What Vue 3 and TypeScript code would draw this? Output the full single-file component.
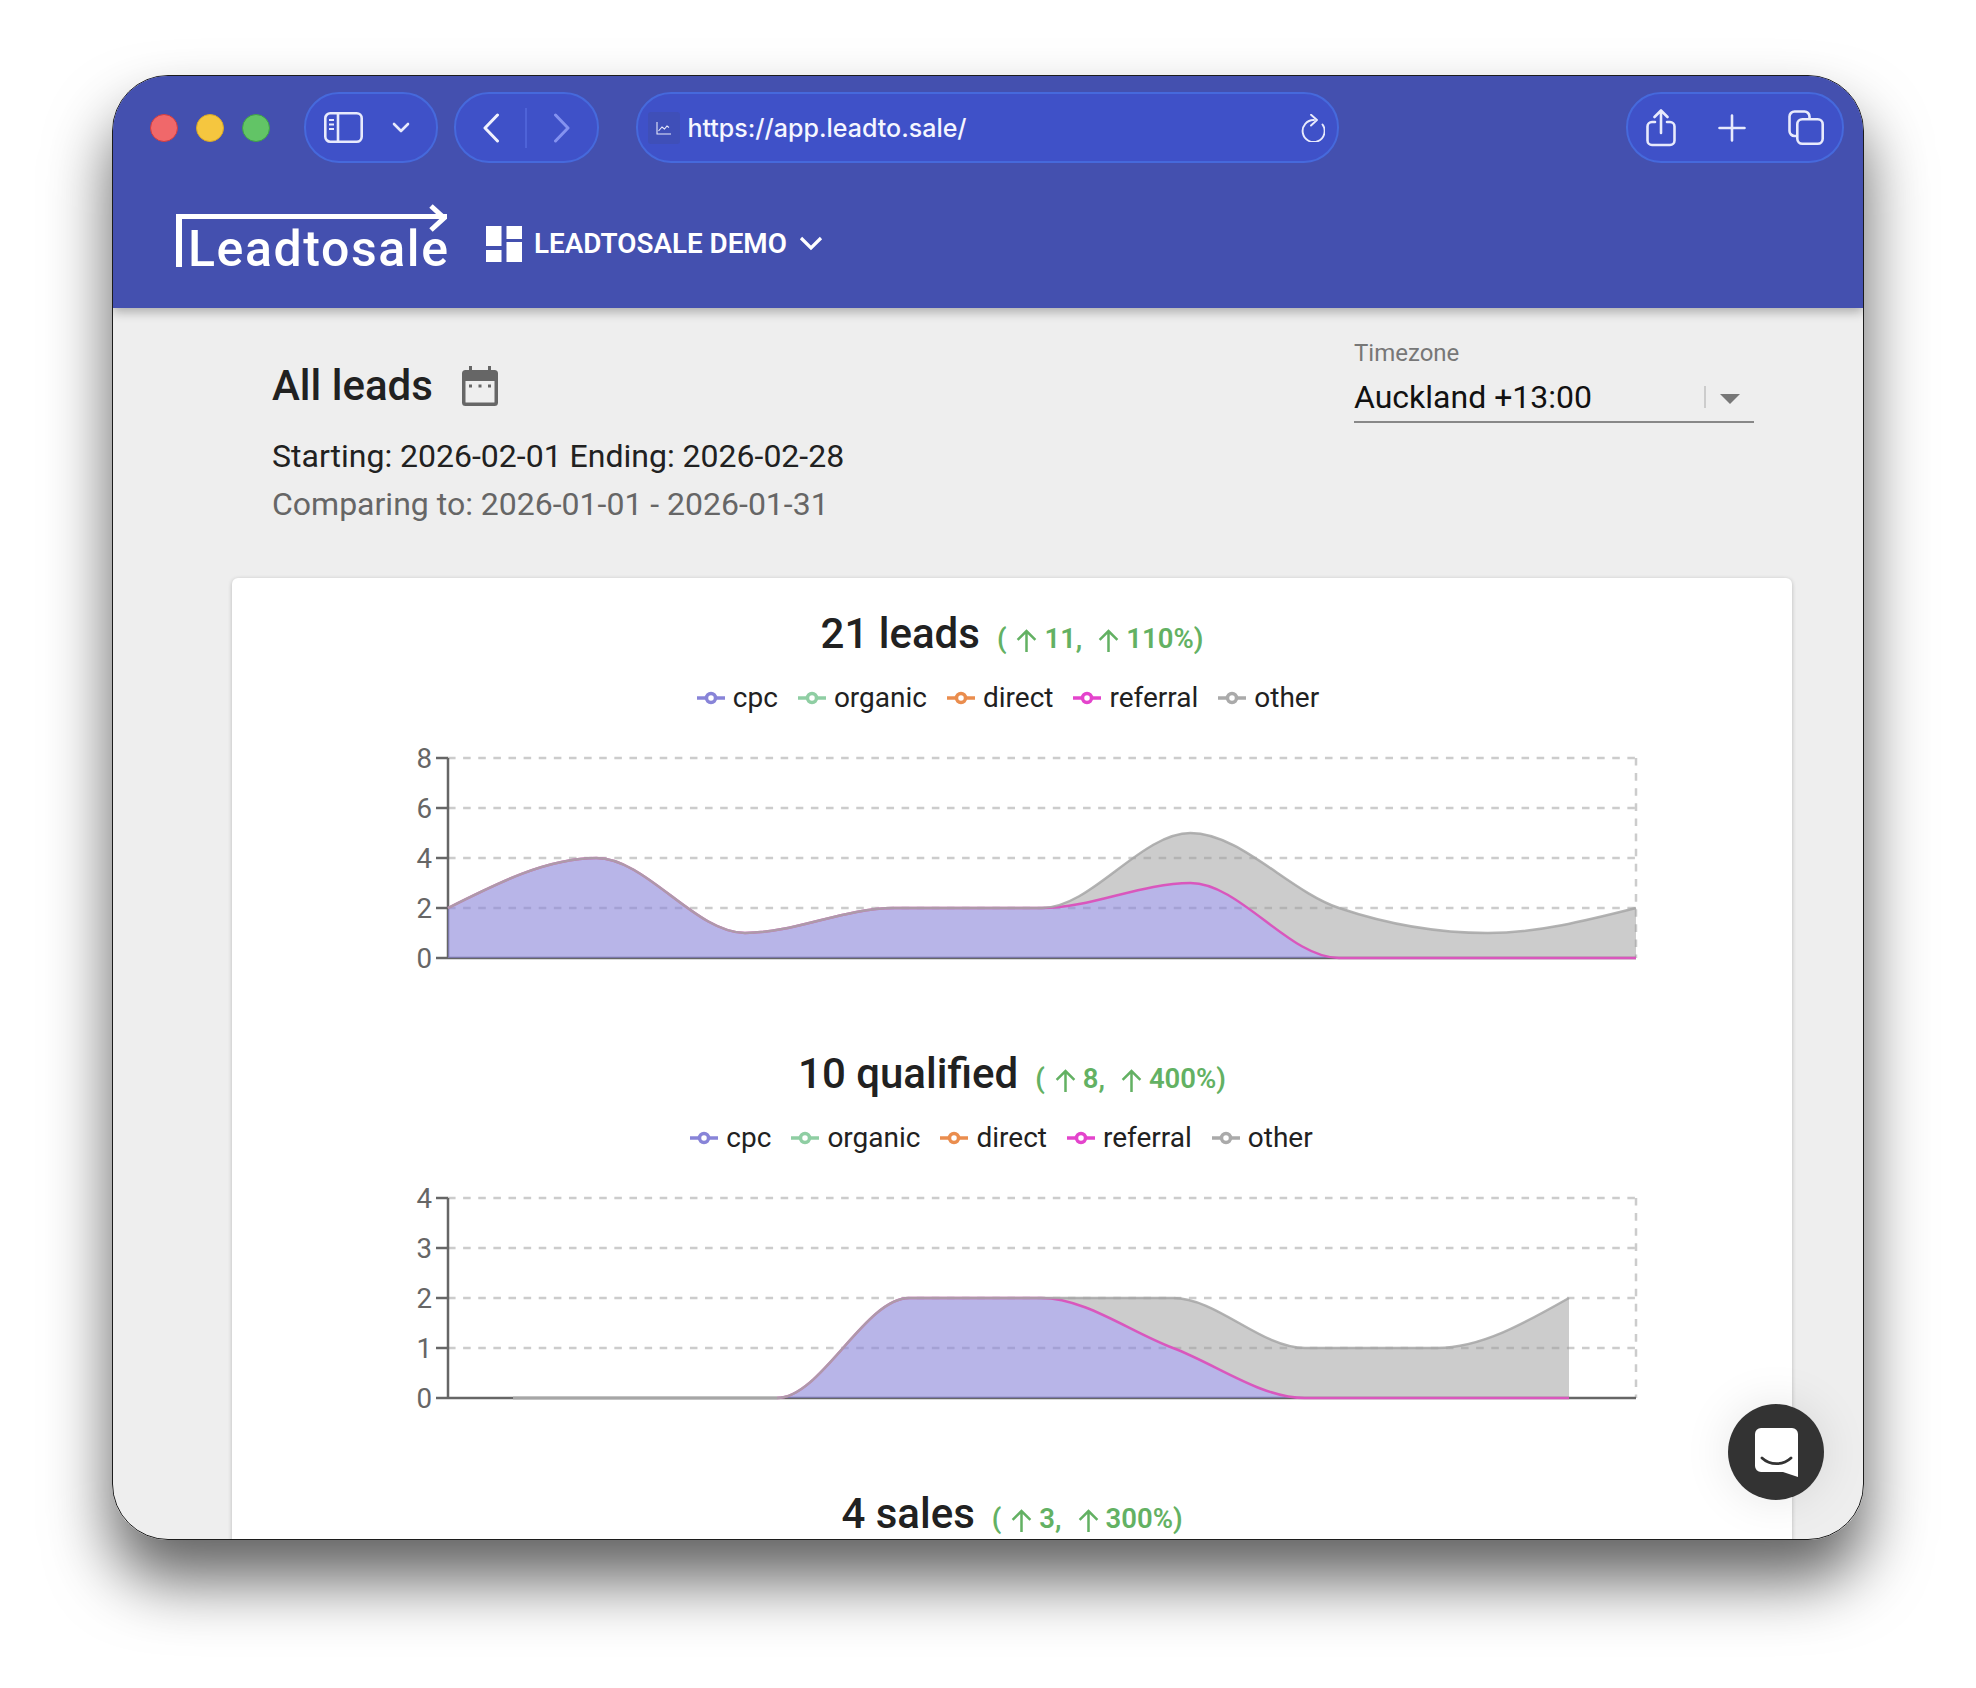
<script setup lang="ts">
interface Series { name: string; color: string }
interface Chart {
  title: string
  deltas: string[]
  legendClass: string
  labels: number[]
  x0: number
  step: number
  cpc: number[]
  total: number[]
  unit: number
}

const series: Series[] = [
  { name: 'cpc', color: '#8884d8' },
  { name: 'organic', color: '#8fcea3' },
  { name: 'direct', color: '#ea8d4e' },
  { name: 'referral', color: '#e444cc' },
  { name: 'other', color: '#aaaaaa' },
]

const charts: Chart[] = [
  {
    title: '21 leads',
    deltas: ['11,', '110%'],
    legendClass: 'legend-a',
    labels: [8, 6, 4, 2, 0],
    x0: 216,
    step: 148.5,
    cpc: [2, 4, 1, 2, 2, 3, 0, 0, 0],
    total: [2, 4, 1, 2, 2, 5, 2, 1, 2],
    unit: 25,
  },
  {
    title: '10 qualified',
    deltas: ['8,', '400%'],
    legendClass: 'legend-b',
    labels: [4, 3, 2, 1, 0],
    x0: 281,
    step: 132,
    cpc: [0, 0, 0, 2, 2, 1, 0, 0, 0],
    total: [0, 0, 0, 2, 2, 2, 1, 1, 2],
    unit: 50,
  },
  {
    title: '4 sales',
    deltas: ['3,', '300%'],
    legendClass: 'legend-a',
    labels: [],
    x0: 0,
    step: 0,
    cpc: [],
    total: [],
    unit: 0,
  },
]

const BASE = 220

function tangents(xs: number[], ys: number[]): number[] {
  const n = xs.length
  const t: number[] = new Array(n).fill(0)
  for (let i = 1; i < n - 1; i++) {
    const h0 = xs[i] - xs[i - 1]
    const h1 = xs[i + 1] - xs[i]
    const s0 = (ys[i] - ys[i - 1]) / h0
    const s1 = (ys[i + 1] - ys[i]) / h1
    const p = (s0 * h1 + s1 * h0) / (h0 + h1)
    t[i] = (Math.sign(s0) + Math.sign(s1)) * Math.min(Math.abs(s0), Math.abs(s1), 0.5 * Math.abs(p)) || 0
  }
  t[0] = (3 * (ys[1] - ys[0]) / (xs[1] - xs[0]) - t[1]) / 2
  t[n - 1] = (3 * (ys[n - 1] - ys[n - 2]) / (xs[n - 1] - xs[n - 2]) - t[n - 2]) / 2
  return t
}

function curve(xs: number[], ys: number[], from = 0): string {
  const t = tangents(xs, ys)
  let d = ''
  for (let i = from; i < xs.length - 1; i++) {
    const dx = (xs[i + 1] - xs[i]) / 3
    d += `C${xs[i] + dx},${ys[i] + dx * t[i]} ${xs[i + 1] - dx},${ys[i + 1] - dx * t[i + 1]} ${xs[i + 1]},${ys[i + 1]}`
  }
  return d
}

function xsOf(c: Chart): number[] {
  return c.total.map((_, i) => c.x0 + i * c.step)
}
function ysOf(c: Chart, v: number[]): number[] {
  return v.map((n) => BASE - n * c.unit)
}
function line(c: Chart, v: number[], from = 0): string {
  const x = xsOf(c)
  const y = ysOf(c, v)
  return `M${x[from]},${y[from]}` + curve(x, y, from)
}
function firstRise(v: number[]): number {
  const i = v.findIndex((n) => n > 0)
  return Math.max(0, i - 1)
}
function flatLead(c: Chart): string {
  const x = xsOf(c)
  return `M${x[0]},${BASE}H${x[firstRise(c.total)]}`
}
function cpcArea(c: Chart): string {
  const x = xsOf(c)
  return `${line(c, c.cpc)}L${x[x.length - 1]},${BASE}L${x[0]},${BASE}Z`
}
function otherArea(c: Chart): string {
  const x = xsOf(c)
  const yb = ysOf(c, c.cpc)
  const rx = [...x].reverse()
  const ry = [...yb].reverse()
  return `${line(c, c.total)}L${rx[0]},${ry[0]}${curve(rx, ry)}Z`
}
function tickY(i: number): number {
  return 20 + i * 50
}
</script>

<template>
  <div class="stage">
    <div class="window">
      <header class="appbar">
        <div class="toolbar">
          <div class="lights">
            <span class="light red"></span>
            <span class="light yellow"></span>
            <span class="light green"></span>
          </div>
          <div class="pill pill-side">
            <svg width="39" height="31" viewBox="0 0 39 31" fill="none" stroke="#e8eafc" stroke-width="2.6">
              <rect x="1.3" y="1.3" width="36.4" height="28.4" rx="5" />
              <path d="M14 1.3v28.4" />
              <path d="M5 8h5M5 12.5h5M5 17h5" stroke-width="1.8" />
            </svg>
            <svg width="18" height="11" viewBox="0 0 18 11" fill="none" stroke="#e8eafc" stroke-width="2.6" stroke-linecap="round" stroke-linejoin="round">
              <path d="M2 2l7 7 7-7" />
            </svg>
          </div>
          <div class="pill pill-nav">
            <svg width="18" height="30" viewBox="0 0 18 30" fill="none" stroke="#f0f1fd" stroke-width="3" stroke-linecap="round" stroke-linejoin="round">
              <path d="M15.5 2L3 15l12.5 13" />
            </svg>
            <span class="nav-divider"></span>
            <svg width="18" height="30" viewBox="0 0 18 30" fill="none" stroke="#8492f0" stroke-width="3" stroke-linecap="round" stroke-linejoin="round">
              <path d="M2.5 2L15 15 2.5 28" />
            </svg>
          </div>
          <div class="pill pill-url">
            <span class="favicon">
              <svg width="16" height="14" viewBox="0 0 16 14" fill="none" stroke="#e8eafc" stroke-width="1.1">
                <path d="M1 1v12h14" />
                <path d="M2.5 10l3.5-4 2.5 2 2.5-3 2 1.5" />
              </svg>
            </span>
            <span class="url">https://app.leadto.sale/</span>
            <svg class="reload" width="24" height="28" viewBox="0 0 24 28" fill="none" stroke="#e8eafc" stroke-width="1.9" stroke-linecap="round" stroke-linejoin="round">
              <path d="M13 6A11 11 0 1 0 21.500 10.500" />
              <path d="M10 0.800L16 6 10 11.500" />
            </svg>
          </div>
          <div class="toolbar-gap"></div>
          <div class="pill pill-actions">
            <svg width="30" height="38" viewBox="0 0 30 38" fill="none" stroke="#e8eafc" stroke-width="2.6" stroke-linecap="round" stroke-linejoin="round">
              <path d="M9 13H6a4.5 4.5 0 0 0-4.5 4.5v14A4.5 4.5 0 0 0 6 36h18a4.5 4.5 0 0 0 4.5-4.5v-14A4.5 4.5 0 0 0 24 13h-3" />
              <path d="M15 24V2M8.5 8L15 1.5 21.5 8" />
            </svg>
            <svg width="28" height="28" viewBox="0 0 28 28" fill="none" stroke="#e8eafc" stroke-width="2.6" stroke-linecap="round">
              <path d="M14 1.5v25M1.5 14h25" />
            </svg>
            <svg width="36" height="35" viewBox="0 0 36 35" fill="none" stroke="#e8eafc" stroke-width="2.6" stroke-linejoin="round">
              <rect x="9.3" y="9.3" width="25.4" height="24.4" rx="5" />
              <path d="M9 26H6.5a5 5 0 0 1-5-5V6.5a5 5 0 0 1 5-5h10a5 5 0 0 1 5 5V9" />
            </svg>
          </div>
        </div>
        <div class="brandbar">
          <div class="logo">
            <span class="logo-text">Leadtosale</span>
            <svg class="logo-arrow" width="20" height="28" viewBox="0 0 20 28" fill="none" stroke="#fff" stroke-width="5">
              <path d="M4 2l13 12L4 26" />
            </svg>
          </div>
          <svg class="dash-icon" width="36" height="36" viewBox="0 0 36 36" fill="#fff">
            <rect x="0" y="0" width="15.5" height="20" />
            <rect x="20.5" y="0" width="15.5" height="13" />
            <rect x="0" y="24" width="15.5" height="12" />
            <rect x="20.5" y="16" width="15.5" height="20" />
          </svg>
          <span class="demo">LEADTOSALE DEMO</span>
          <svg class="demo-chevron" width="24" height="15" viewBox="0 0 24 15" fill="none" stroke="#fff" stroke-width="3.2">
            <path d="M2 2l10 10L22 2" />
          </svg>
        </div>
      </header>

      <main class="content">
        <section class="summary">
          <div class="summary-left">
            <div class="title-row">
              <h1 class="title">All leads</h1>
              <svg width="36" height="40" viewBox="0 0 36 40" fill="#666">
                <path d="M7 0h3v4h16V0h3v4h3.500A3.500 3.500 0 0 1 36 7.500V36.500A3.500 3.500 0 0 1 32.500 40h-29A3.500 3.500 0 0 1 0 36.500V7.500A3.500 3.500 0 0 1 3.500 4H7zM3.500 15v21a.500.500 0 0 0 .500.500h28a.500.500 0 0 0 .500-.500V15z" fill-rule="evenodd" />
                <rect x="7" y="18.500" width="3" height="3" />
                <rect x="16.500" y="18.500" width="3" height="3" />
                <rect x="26" y="18.500" width="3" height="3" />
              </svg>
            </div>
            <p class="period">Starting: 2026-02-01 Ending: 2026-02-28</p>
            <p class="period muted">Comparing to: 2026-01-01 - 2026-01-31</p>
          </div>
          <div class="timezone">
            <div class="tz-label">Timezone</div>
            <div class="tz-field">
              <span class="tz-value">Auckland +13:00</span>
              <span class="tz-sep"></span>
              <span class="tz-caret"></span>
            </div>
          </div>
        </section>

        <section class="card">
          <article v-for="c in charts" :key="c.title" class="chart">
            <h2 class="chart-head">
              <span class="chart-title">{{ c.title }}</span>
              <span class="delta">
                <span>(</span>
                <svg class="up" width="21" height="23" viewBox="0 0 20 22" fill="none" stroke="#63b163" stroke-width="2.400">
                  <path d="M10 22V2M1.500 10.500L10 2l8.500 8.500" />
                </svg>
                <span>{{ c.deltas[0] }}</span>
                <svg class="up second" width="21" height="23" viewBox="0 0 20 22" fill="none" stroke="#63b163" stroke-width="2.400">
                  <path d="M10 22V2M1.500 10.500L10 2l8.500 8.500" />
                </svg>
                <span>{{ c.deltas[1] }})</span>
              </span>
            </h2>
            <ul v-if="c.total.length" class="legend" :class="c.legendClass">
              <li v-for="s in series" :key="s.name" class="legend-item">
                <svg width="28" height="14" viewBox="0 0 28 14" fill="#fff" :stroke="s.color" stroke-width="3.500">
                  <path d="M0 7h28" />
                  <circle cx="14" cy="7" r="4.500" />
                </svg>
                <span>{{ s.name }}</span>
              </li>
            </ul>
            <svg v-if="c.total.length" class="plot" width="1560" height="240" viewBox="0 0 1560 240">
              <g stroke="#cccccc" stroke-width="2.500" stroke-dasharray="7.560 7.560" fill="none">
                <path v-for="(l, i) in c.labels.slice(0, 4)" :key="l" :d="`M216,${tickY(i)}H1404`" />
                <path d="M1404,20V220" />
              </g>
              <g stroke="#666666" stroke-width="2.500" fill="none">
                <path d="M216,20V220M216,220H1404" />
                <path v-for="(l, i) in c.labels" :key="l" :d="`M204,${tickY(i)}H216`" />
              </g>
              <text v-for="(l, i) in c.labels" :key="l" class="tick" x="200" :y="tickY(i) + 10" text-anchor="end">{{ l }}</text>
              <path :d="cpcArea(c)" fill="#8884d8" fill-opacity="0.6" />
              <path :d="otherArea(c)" fill="#999999" fill-opacity="0.5" />
              <path :d="line(c, c.cpc, firstRise(c.cpc))" fill="none" stroke="#d957bd" stroke-width="2.500" />
              <path :d="flatLead(c)" fill="none" stroke="#a8a8a8" stroke-width="2.500" />
              <path :d="line(c, c.total)" fill="none" stroke="#a6a6a6" stroke-opacity="0.85" stroke-width="2.500" />
            </svg>
          </article>
        </section>
      </main>

      <button class="chat" type="button" aria-label="Chat">
        <svg width="43" height="49" viewBox="0 0 43 49">
          <path d="M6 0h31a6 6 0 0 1 6 6v43l-15-5H6a6 6 0 0 1-6-6V6a6 6 0 0 1 6-6z" fill="#fff" />
          <path d="M7 30c8 7.500 21 7.500 29 0" fill="none" stroke="#333" stroke-width="2.800" stroke-linecap="round" />
        </svg>
      </button>
    </div>
  </div>
</template>

<style>
html,
body {
  margin: 0;
  background: #ffffff;
}
</style>

<style scoped>
* {
  box-sizing: border-box;
}
.stage {
  position: relative;
  width: 1976px;
  height: 1688px;
  padding: 75px 112px 148px;
  overflow: hidden;
  font-family: Roboto, "Liberation Sans", sans-serif;
}
.stage::before {
  content: "";
  position: absolute;
  left: 112px;
  top: 75px;
  width: 1752px;
  height: 1465px;
  border-radius: 56px;
  box-shadow: 0 40px 64px rgba(0, 0, 0, 0.62);
}
.window {
  position: relative;
  width: 1752px;
  height: 1465px;
  background: #eeeeee;
  border: 1px solid #1c1c1c;
  border-radius: 56px;
  overflow: hidden;
  display: flex;
  flex-direction: column;
}
.appbar {
  position: relative;
  z-index: 2;
  height: 232px;
  flex: none;
  background: #4450af;
  box-shadow: 0 4px 10px rgba(0, 0, 0, 0.28);
  padding-top: 16px;
}
.toolbar {
  display: flex;
  align-items: center;
  height: 71px;
  padding: 0 19px 0 37px;
}
.lights {
  display: flex;
  gap: 18px;
  margin-right: 34px;
}
.light {
  width: 28px;
  height: 28px;
  border-radius: 50%;
  border: 1px solid rgba(0, 0, 0, 0.18);
}
.red {
  background: #f0686a;
  border-color: #d23c3e;
}
.yellow {
  background: #f5c63f;
  border-color: #d9a825;
}
.green {
  background: #62c466;
  border-color: #3fa047;
}
.pill {
  display: flex;
  align-items: center;
  height: 71px;
  border-radius: 35px;
  background: #3f51c8;
  border: 2px solid #4669dc;
}
.pill-side {
  width: 134px;
  padding-left: 18px;
  gap: 29px;
  margin-right: 15.500px;
}
.pill-nav {
  width: 145px;
  padding-left: 26px;
  margin-right: 37px;
}
.nav-divider {
  width: 2px;
  height: 40px;
  margin: 0 26px 0 25px;
  background: #4e63d8;
}
.pill-url {
  width: 703.500px;
  padding-left: 10px;
}
.favicon {
  display: flex;
  align-items: center;
  justify-content: center;
  width: 32px;
  height: 32px;
  background: #3f4fb8;
  border-radius: 3px;
  margin-right: 8px;
}
.url {
  flex: 1;
  font-family: Inter, Roboto, sans-serif;
  font-size: 25px;
  font-weight: 500;
  color: #f5f6ff;
}
.reload {
  margin-right: 12px;
}
.toolbar-gap {
  flex: 1;
}
.pill-actions {
  width: 218px;
  padding: 0 18px 0 18px;
  justify-content: space-between;
}
.brandbar {
  display: flex;
  align-items: flex-start;
  padding: 0 0 0 63px;
  height: 100px;
  margin-top: 51px;
}
.logo {
  position: relative;
  width: 271px;
  height: 53px;
  padding-left: 6px;
  border-top: 5px solid #fff;
  border-left: 6px solid #fff;
}
.logo-text {
  display: block;
  font-size: 50px;
  font-weight: 500;
  line-height: 50px;
  letter-spacing: 1.600px;
  color: #fff;
  white-space: nowrap;
  margin-top: 5px;
}
.logo-arrow {
  position: absolute;
  right: 0;
  top: -15px;
}
.dash-icon {
  margin: 12px 12px 0 39px;
}
.demo {
  font-size: 27.800px;
  font-weight: 600;
  line-height: 36px;
  margin-top: 12px;
  color: #fff;
  white-space: nowrap;
}
.demo-chevron {
  margin: 22px 0 0 12px;
}
.content {
  flex: 1;
  min-height: 0;
  padding-left: 119px;
}
.summary {
  display: flex;
  justify-content: space-between;
  padding: 30px 109px 0 40px;
}
.summary-left {
  padding-top: 20px;
}
.title-row {
  display: flex;
  align-items: center;
  gap: 29px;
  height: 56px;
  margin-bottom: 18px;
}
.title {
  margin: 0;
  font-size: 42px;
  font-weight: 500;
  line-height: 56px;
  color: #212121;
}
.period {
  margin: 0;
  font-size: 32px;
  line-height: 48px;
  color: #212121;
}
.muted {
  color: #666666;
}
.timezone {
  width: 400px;
}
.tz-label {
  font-size: 24px;
  line-height: 30px;
  color: #777777;
  margin-bottom: 9px;
}
.tz-field {
  display: flex;
  align-items: center;
  height: 46px;
  padding-bottom: 4px;
  border-bottom: 2px solid #888888;
}
.tz-value {
  flex: 1;
  font-size: 32px;
  line-height: 40px;
  color: #111111;
}
.tz-sep {
  width: 2px;
  height: 22px;
  background: #cccccc;
  margin-right: 14px;
}
.tz-caret {
  width: 0;
  height: 0;
  border-left: 10px solid transparent;
  border-right: 10px solid transparent;
  border-top: 10px solid #777777;
  margin-right: 14px;
  margin-top: 3px;
}
.card {
  width: 1560px;
  margin-top: 50px;
  padding-top: 31px;
  background: #ffffff;
  border-radius: 6px 6px 0 0;
  box-shadow: 0 1px 4px rgba(0, 0, 0, 0.22);
  min-height: 962px;
}
.chart {
  height: 440px;
}
.chart-head {
  display: flex;
  justify-content: center;
  align-items: baseline;
  gap: 17px;
  margin: 0 0 19px;
  height: 50px;
  line-height: 50px;
  font-weight: 500;
}
.chart-title {
  font-size: 42px;
  color: #212121;
}
.delta {
  display: inline-flex;
  align-items: baseline;
  font-size: 27.500px;
  font-weight: 600;
  color: #63b163;
  white-space: nowrap;
}
.up {
  align-self: center;
  margin: 0 7px 0 10px;
  position: relative;
  top: 1.500px;
}
.up.second {
  margin-left: 16px;
}
.legend {
  list-style: none;
  display: flex;
  justify-content: center;
  gap: 20px;
  height: 40px;
  margin: 0 0 20px;
  padding: 0;
  font-size: 28px;
  line-height: 40px;
  color: #212121;
}
.legend-a {
  margin-right: 8px;
}
.legend-b {
  margin-right: 21px;
}
.legend-item {
  display: flex;
  align-items: center;
  gap: 8px;
}
.plot {
  display: block;
}
.tick {
  font-size: 27.700px;
  fill: #666666;
}
.chat {
  position: absolute;
  z-index: 3;
  left: 1615px;
  top: 1328px;
  width: 96px;
  height: 96px;
  padding: 0 0 0 1px;
  border: 0;
  border-radius: 50%;
  background: #333333;
  display: flex;
  align-items: center;
  justify-content: center;
  box-shadow: 0 0 48px rgba(0, 0, 0, 0.1);
}
</style>
